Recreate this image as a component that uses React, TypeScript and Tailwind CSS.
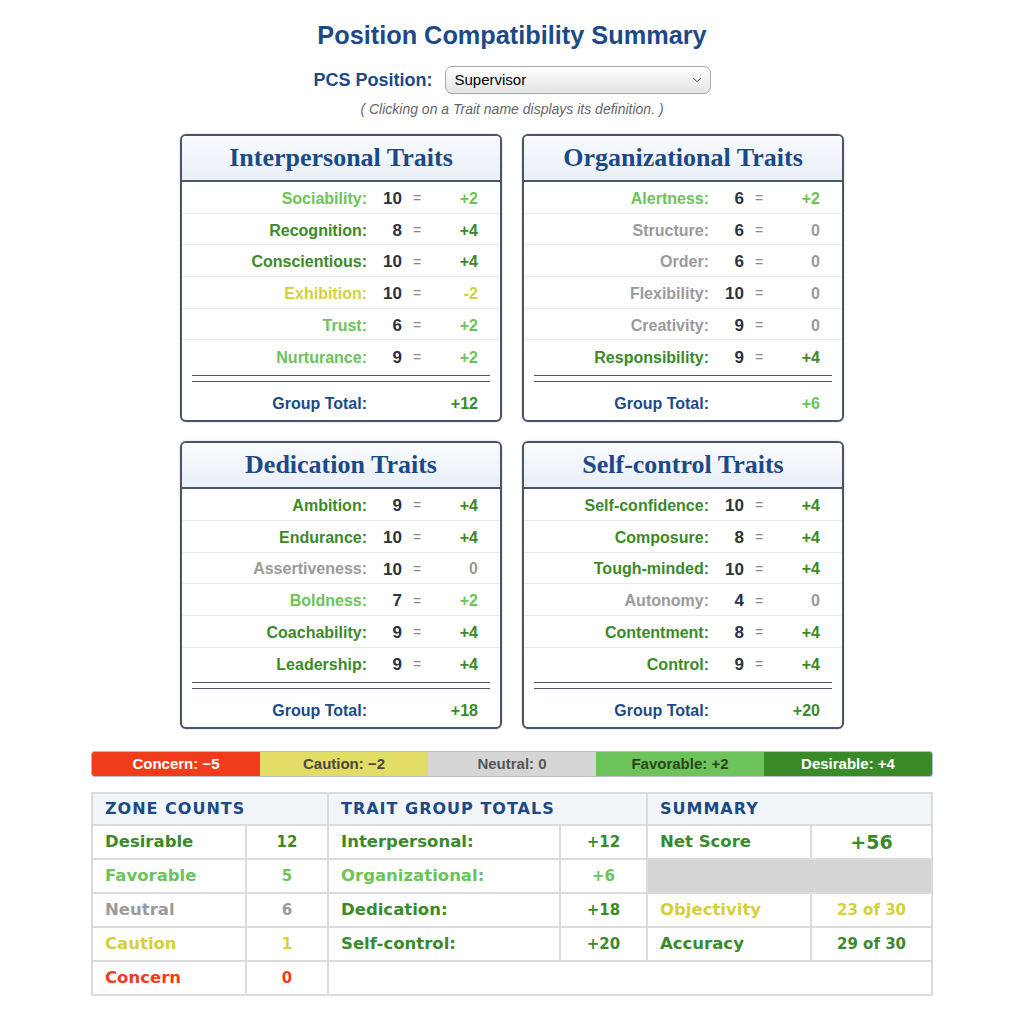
import { ChevronDown } from "lucide-react";

type Zone = "desirable" | "favorable" | "neutral" | "caution" | "concern";

interface Trait {
  name: string;
  value: number;
  score: string;
  zone: Zone;
}

interface TraitGroup {
  title: string;
  traits: Trait[];
  total: string;
  totalZone: Zone;
}

const zoneText: Record<Zone, string> = {
  desirable: "text-[#3a8a2a]",
  favorable: "text-[#6cc35a]",
  neutral: "text-[#9a9a9a]",
  caution: "text-[#d4d03a]",
  concern: "text-[#f03c1a]",
};

const groups: TraitGroup[] = [
  {
    title: "Interpersonal Traits",
    traits: [
      { name: "Sociability", value: 10, score: "+2", zone: "favorable" },
      { name: "Recognition", value: 8, score: "+4", zone: "desirable" },
      { name: "Conscientious", value: 10, score: "+4", zone: "desirable" },
      { name: "Exhibition", value: 10, score: "-2", zone: "caution" },
      { name: "Trust", value: 6, score: "+2", zone: "favorable" },
      { name: "Nurturance", value: 9, score: "+2", zone: "favorable" },
    ],
    total: "+12",
    totalZone: "desirable",
  },
  {
    title: "Organizational Traits",
    traits: [
      { name: "Alertness", value: 6, score: "+2", zone: "favorable" },
      { name: "Structure", value: 6, score: "0", zone: "neutral" },
      { name: "Order", value: 6, score: "0", zone: "neutral" },
      { name: "Flexibility", value: 10, score: "0", zone: "neutral" },
      { name: "Creativity", value: 9, score: "0", zone: "neutral" },
      { name: "Responsibility", value: 9, score: "+4", zone: "desirable" },
    ],
    total: "+6",
    totalZone: "favorable",
  },
  {
    title: "Dedication Traits",
    traits: [
      { name: "Ambition", value: 9, score: "+4", zone: "desirable" },
      { name: "Endurance", value: 10, score: "+4", zone: "desirable" },
      { name: "Assertiveness", value: 10, score: "0", zone: "neutral" },
      { name: "Boldness", value: 7, score: "+2", zone: "favorable" },
      { name: "Coachability", value: 9, score: "+4", zone: "desirable" },
      { name: "Leadership", value: 9, score: "+4", zone: "desirable" },
    ],
    total: "+18",
    totalZone: "desirable",
  },
  {
    title: "Self-control Traits",
    traits: [
      { name: "Self-confidence", value: 10, score: "+4", zone: "desirable" },
      { name: "Composure", value: 8, score: "+4", zone: "desirable" },
      { name: "Tough-minded", value: 10, score: "+4", zone: "desirable" },
      { name: "Autonomy", value: 4, score: "0", zone: "neutral" },
      { name: "Contentment", value: 8, score: "+4", zone: "desirable" },
      { name: "Control", value: 9, score: "+4", zone: "desirable" },
    ],
    total: "+20",
    totalZone: "desirable",
  },
];

const TraitCard = ({ group }: { group: TraitGroup }) => (
  <div className="rounded-[6px] border-2 border-[#4b5565] bg-white overflow-hidden shadow-[0_0_2px_rgba(0,0,0,0.25)]">
    <div className="h-[46px] flex items-center justify-center border-b-2 border-[#4b5565] bg-linear-to-b from-[#f9fbfd] to-[#e9eff7]">
      <h2 className="font-['Liberation_Serif',serif] font-bold text-[26px] text-[#1c4a86] leading-none">
        {group.title}
      </h2>
    </div>
    {group.traits.map((t, i) => (
      <div
        key={t.name}
        className={`h-[31.7px] pt-[3px] flex items-center ${i < group.traits.length - 1 ? "border-b border-[#e7e9ed]" : ""}`}
      >
        <span className={`w-[185px] text-right text-[16px] font-bold cursor-pointer ${zoneText[t.zone]}`}>
          {t.name}:
        </span>
        <span className="w-[35px] text-right text-[17px] font-bold text-[#2b3240]">{t.value}</span>
        <span className="w-[30px] text-center text-[14px] text-[#8a8a8a]">=</span>
        <span className={`w-[46px] text-right text-[16px] font-bold ${zoneText[t.zone]}`}>{t.score}</span>
      </div>
    ))}
    <div className="mx-[10px] mt-[3px] h-[7px] border-y border-[#4b5565]" />
    <div className="h-[38px] pt-[5px] flex items-center">
      <span className="w-[185px] text-right text-[16px] font-bold text-[#1c4a86]">Group Total:</span>
      <span className="w-[65px]" />
      <span className={`w-[46px] text-right text-[16px] font-bold ${zoneText[group.totalZone]}`}>
        {group.total}
      </span>
    </div>
  </div>
);

const legend = [
  { label: "Concern: \u22125", cls: "bg-[#f03c1a] text-white" },
  { label: "Caution: \u22122", cls: "bg-[#e1dd66] text-[#4a4a3c]" },
  { label: "Neutral: 0", cls: "bg-[#d5d5d5] text-[#555555]" },
  { label: "Favorable: +2", cls: "bg-[#6cc35a] text-[#2a4320]" },
  { label: "Desirable: +4", cls: "bg-[#3a8a2a] text-white" },
];

const Cell = ({ children, className = "" }: { children?: React.ReactNode; className?: string }) => (
  <div className={`bg-white flex items-center ${className}`}>{children}</div>
);

const App = () => {
  return (
    <div className="min-h-screen bg-white font-['Liberation_Sans',Arial,sans-serif] pt-[19px] pb-[20px]">
      <h1 className="text-center text-[25.3px] font-bold text-[#1c4a86] leading-[32px]">
        Position Compatibility Summary
      </h1>

      <div className="mt-[15px] flex items-center justify-center gap-[12px]">
        <span className="text-[18px] font-bold text-[#1c4a86]">PCS Position:</span>
        <div className="w-[266px] h-[28px] rounded-[7px] border border-[#a8a8a8] bg-linear-to-b from-white to-[#e4e4e4] flex items-center justify-between pl-[9px] pr-[6px]">
          <span className="text-[15px] text-black">Supervisor</span>
          <ChevronDown className="w-[14px] h-[14px] text-[#333]" strokeWidth={1.6} />
        </div>
      </div>

      <p className="mt-[6px] text-center text-[14px] italic text-[#666666] leading-[18px]">
        ( Clicking on a Trait name displays its definition. )
      </p>

      <div className="mt-[16px] mx-auto w-[664px] grid grid-cols-2 gap-x-[20px] gap-y-[19px]">
        {groups.map((g) => (
          <TraitCard key={g.title} group={g} />
        ))}
      </div>

      <div className="mt-[22px] mx-auto w-[842px] h-[26px] grid grid-cols-5 rounded-[3px] overflow-hidden border border-[#b9bdc4]">
        {legend.map((l) => (
          <div key={l.label} className={`flex items-center justify-center text-[15px] font-bold ${l.cls}`}>
            {l.label}
          </div>
        ))}
      </div>

      <div className="mt-[15px] mx-auto w-[842px] bg-[#dcdcdc] p-[2px] grid grid-cols-[152px_80px_230px_85px_162px_1fr] grid-rows-[30px_repeat(5,32px)] gap-[2px] font-['DejaVu_Sans',Verdana,sans-serif] font-bold text-[16.5px]">
        <div className="col-span-2 bg-[#f2f6fb] flex items-center pl-[12px] text-[16px] tracking-[1px] text-[#1c4a86]">
          ZONE COUNTS
        </div>
        <div className="col-span-2 bg-[#f2f6fb] flex items-center pl-[12px] text-[16px] tracking-[1px] text-[#1c4a86]">
          TRAIT GROUP TOTALS
        </div>
        <div className="col-span-2 bg-[#f2f6fb] flex items-center pl-[12px] text-[16px] tracking-[1px] text-[#1c4a86]">
          SUMMARY
        </div>

        <Cell className="pl-[12px] text-[#3a8a2a]">Desirable</Cell>
        <Cell className="justify-center text-[#3a8a2a] text-[15px]">12</Cell>
        <Cell className="pl-[12px] text-[#3a8a2a]">Interpersonal:</Cell>
        <Cell className="justify-center text-[#3a8a2a] text-[15px]">+12</Cell>
        <Cell className="pl-[12px] text-[#3a8a2a]">Net Score</Cell>
        <Cell className="justify-center text-[#3a8a2a] text-[19px]">+56</Cell>

        <Cell className="pl-[12px] text-[#6cc35a]">Favorable</Cell>
        <Cell className="justify-center text-[#6cc35a] text-[15px]">5</Cell>
        <Cell className="pl-[12px] text-[#6cc35a]">Organizational:</Cell>
        <Cell className="justify-center text-[#6cc35a] text-[15px]">+6</Cell>
        <div className="col-span-2 bg-[#d5d5d5]" />

        <Cell className="pl-[12px] text-[#9a9a9a]">Neutral</Cell>
        <Cell className="justify-center text-[#9a9a9a] text-[15px]">6</Cell>
        <Cell className="pl-[12px] text-[#3a8a2a]">Dedication:</Cell>
        <Cell className="justify-center text-[#3a8a2a] text-[15px]">+18</Cell>
        <Cell className="pl-[12px] text-[#d4d03a]">Objectivity</Cell>
        <Cell className="justify-center text-[#d4d03a] text-[15px]">23 of 30</Cell>

        <Cell className="pl-[12px] text-[#d4d03a]">Caution</Cell>
        <Cell className="justify-center text-[#d4d03a] text-[15px]">1</Cell>
        <Cell className="pl-[12px] text-[#3a8a2a]">Self-control:</Cell>
        <Cell className="justify-center text-[#3a8a2a] text-[15px]">+20</Cell>
        <Cell className="pl-[12px] text-[#3a8a2a]">Accuracy</Cell>
        <Cell className="justify-center text-[#3a8a2a] text-[15px]">29 of 30</Cell>

        <Cell className="pl-[12px] text-[#f03c1a]">Concern</Cell>
        <Cell className="justify-center text-[#f03c1a] text-[15px]">0</Cell>
        <div className="col-span-4 bg-white" />
      </div>
    </div>
  );
};

export default App;
